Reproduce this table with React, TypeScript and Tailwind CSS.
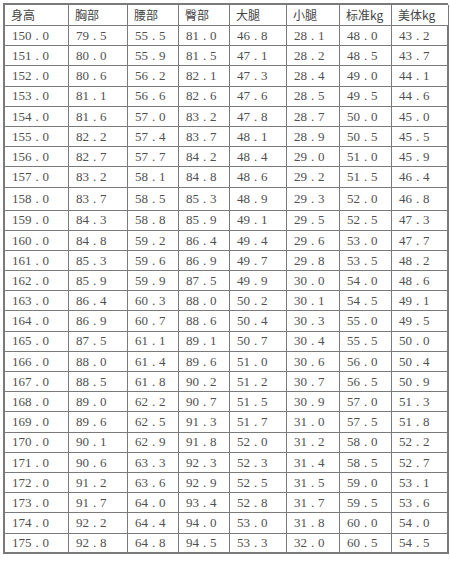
const headers = ['身高', '胸部', '腰部', '臀部', '大腿', '小腿', '标准kg', '美体kg'];

const rows = [
  ['150.0', '79.5', '55.5', '81.0', '46.8', '28.1', '48.0', '43.2'],
  ['151.0', '80.0', '55.9', '81.5', '47.1', '28.2', '48.5', '43.7'],
  ['152.0', '80.6', '56.2', '82.1', '47.3', '28.4', '49.0', '44.1'],
  ['153.0', '81.1', '56.6', '82.6', '47.6', '28.5', '49.5', '44.6'],
  ['154.0', '81.6', '57.0', '83.2', '47.8', '28.7', '50.0', '45.0'],
  ['155.0', '82.2', '57.4', '83.7', '48.1', '28.9', '50.5', '45.5'],
  ['156.0', '82.7', '57.7', '84.2', '48.4', '29.0', '51.0', '45.9'],
  ['157.0', '83.2', '58.1', '84.8', '48.6', '29.2', '51.5', '46.4'],
  ['158.0', '83.7', '58.5', '85.3', '48.9', '29.3', '52.0', '46.8'],
  ['159.0', '84.3', '58.8', '85.9', '49.1', '29.5', '52.5', '47.3'],
  ['160.0', '84.8', '59.2', '86.4', '49.4', '29.6', '53.0', '47.7'],
  ['161.0', '85.3', '59.6', '86.9', '49.7', '29.8', '53.5', '48.2'],
  ['162.0', '85.9', '59.9', '87.5', '49.9', '30.0', '54.0', '48.6'],
  ['163.0', '86.4', '60.3', '88.0', '50.2', '30.1', '54.5', '49.1'],
  ['164.0', '86.9', '60.7', '88.6', '50.4', '30.3', '55.0', '49.5'],
  ['165.0', '87.5', '61.1', '89.1', '50.7', '30.4', '55.5', '50.0'],
  ['166.0', '88.0', '61.4', '89.6', '51.0', '30.6', '56.0', '50.4'],
  ['167.0', '88.5', '61.8', '90.2', '51.2', '30.7', '56.5', '50.9'],
  ['168.0', '89.0', '62.2', '90.7', '51.5', '30.9', '57.0', '51.3'],
  ['169.0', '89.6', '62.5', '91.3', '51.7', '31.0', '57.5', '51.8'],
  ['170.0', '90.1', '62.9', '91.8', '52.0', '31.2', '58.0', '52.2'],
  ['171.0', '90.6', '63.3', '92.3', '52.3', '31.4', '58.5', '52.7'],
  ['172.0', '91.2', '63.6', '92.9', '52.5', '31.5', '59.0', '53.1'],
  ['173.0', '91.7', '64.0', '93.4', '52.8', '31.7', '59.5', '53.6'],
  ['174.0', '92.2', '64.4', '94.0', '53.0', '31.8', '60.0', '54.0'],
  ['175.0', '92.8', '64.8', '94.5', '53.3', '32.0', '60.5', '54.5'],
];

const widths = ['w-[64px]', 'w-[59px]', 'w-[51px]', 'w-[51px]', 'w-[57px]', 'w-[53px]', 'w-[52px]', 'w-[57px]'];

function Num({ value }: { value: string }) {
  const [whole, frac] = value.split('.');
  return (
    <span className="flex items-center">
      <span>{whole}</span>
      <span className="inline-block w-[11px] text-center">.</span>
      <span>{frac}</span>
    </span>
  );
}

export default function App() {
  return (
    <div className="w-[450px] h-[561px] bg-white pt-[3px] pl-[3px] font-['Liberation_Serif','Noto_Sans_CJK_SC',serif] text-[13px] text-[#505050]">
      <div className="w-[445px] border-t-[2px] border-l-[2px] border-[#7a7a7a]">
        <div className="flex h-[21px]">
          {headers.map((h, i) => (
            <div
              key={h}
              className={`${widths[i]} shrink-0 flex items-center pl-[6px] border-r border-b border-[#7a7a7a] text-[12px] font-['Noto_Sans_CJK_SC',sans-serif] text-[#444]`}
            >
              {h}
            </div>
          ))}
        </div>
        {rows.map((r) => (
          <div key={r[0]} className={`flex ${r[0] === '158.0' ? 'h-[23px]' : 'h-[20.2px]'}`}>
            {r.map((v, i) => (
              <div
                key={i}
                className={`${widths[i]} shrink-0 flex items-center pl-[7px] border-r border-b border-[#7a7a7a] ${i === 7 ? 'border-r-[2px]' : ''} ${r[0] === '175.0' ? 'border-b-[2px]' : ''}`}
              >
                <Num value={v} />
              </div>
            ))}
          </div>
        ))}
      </div>
    </div>
  );
}
